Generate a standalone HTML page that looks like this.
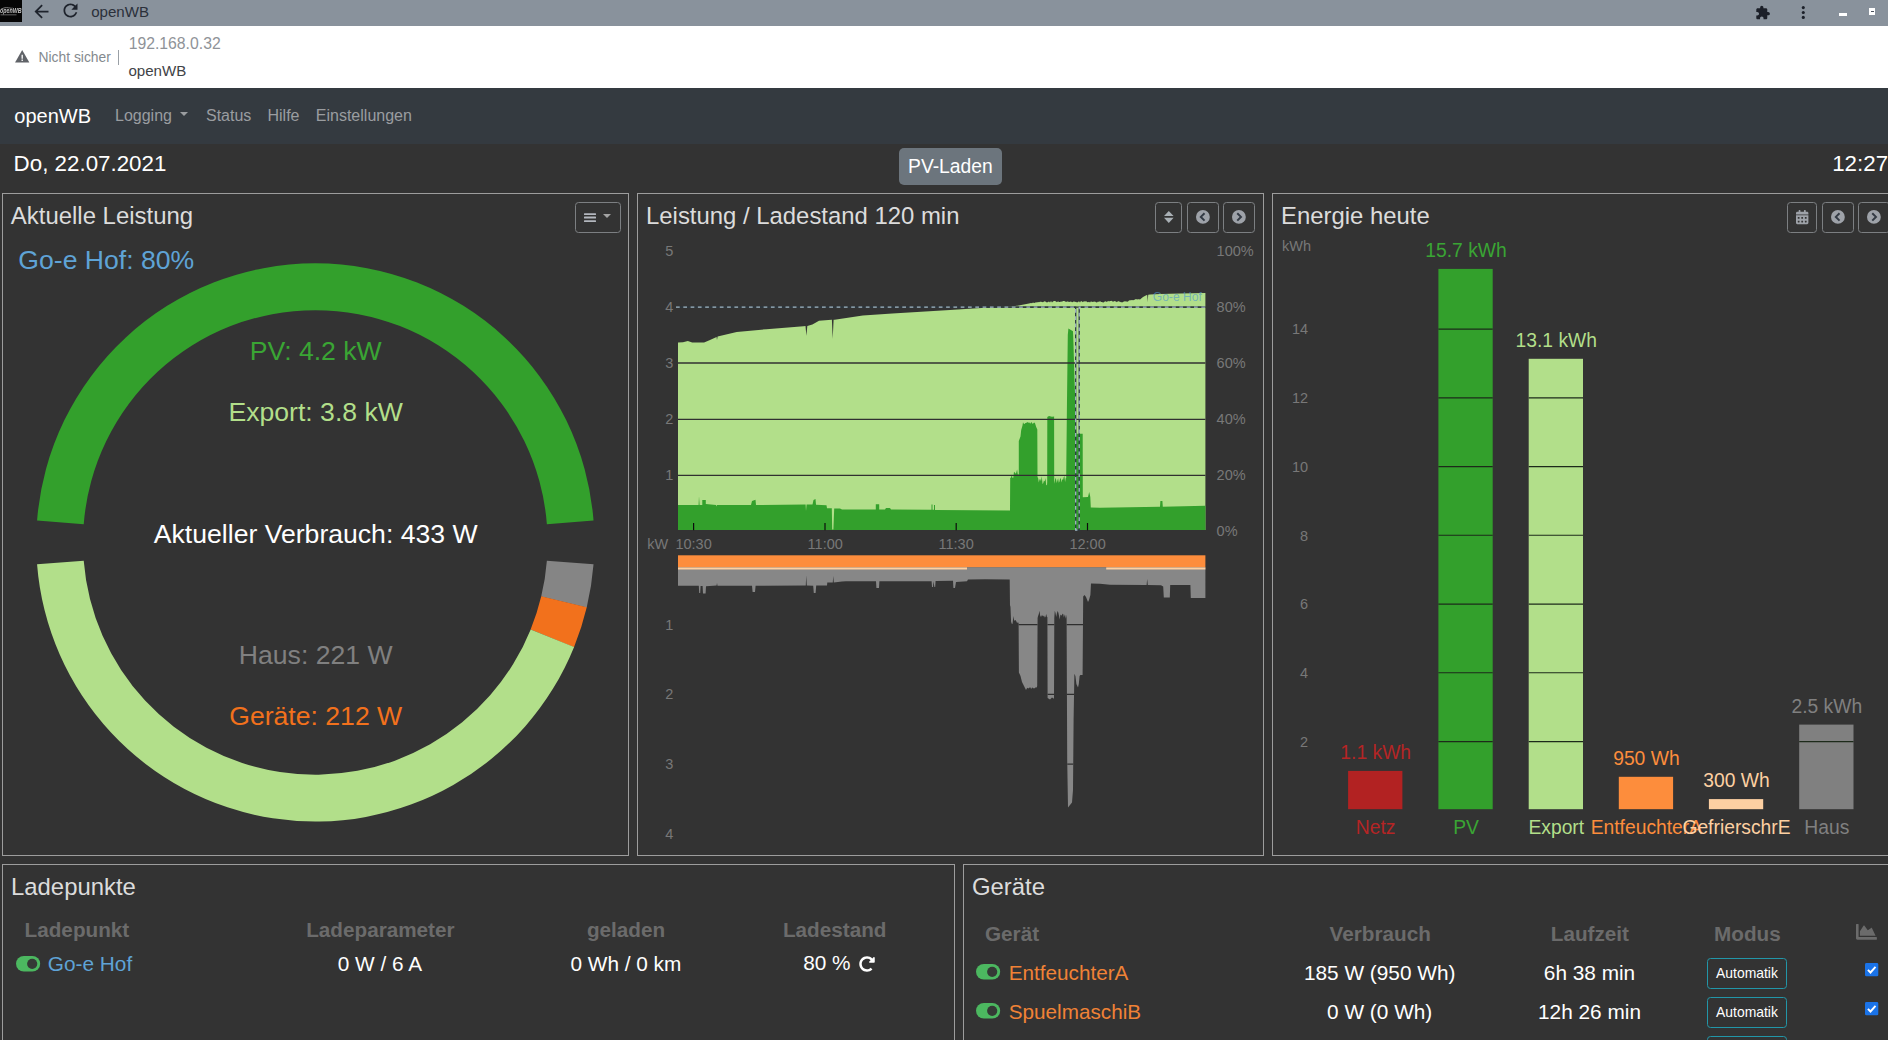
<!DOCTYPE html>
<html lang="de"><head><meta charset="utf-8"><title>openWB</title>
<style>
html,body{margin:0;padding:0;}
body{width:1888px;height:1040px;overflow:hidden;position:relative;background:#333333;font-family:"Liberation Sans", sans-serif;}
.t{position:absolute;white-space:nowrap;line-height:1;font-family:"Liberation Sans", sans-serif;}
.abs{position:absolute;}
.panel{position:absolute;box-sizing:border-box;border:1px solid #9d9d9d;background:#333333;}
.btn{position:absolute;box-sizing:border-box;border:1px solid #7c7f82;border-radius:3.5px;}
svg{position:absolute;overflow:visible;}
</style></head><body>

<div class="abs" style="left:0;top:0;width:1888px;height:26px;background:#89929c;"></div>
<div class="abs" style="left:0;top:0;width:22px;height:22px;background:#050505;"></div>
<svg style="left:0;top:0" width="22" height="22" viewBox="0 0 22 22"><defs><filter id="fb" x="-20%" y="-50%" width="140%" height="200%"><feGaussianBlur stdDeviation=".55"/></filter></defs><g filter="url(#fb)"><text x="10.8" y="12.600" font-family='"Liberation Sans", sans-serif' font-style="italic" font-weight="bold" font-size="6.600" text-anchor="middle" fill="#c4c4c4" textLength="21.500" lengthAdjust="spacingAndGlyphs">openWB</text><path d="M1 9.200c3-1.600 5-1.800 7.500-1.400s3 .7 4 .2" fill="none" stroke="#9a9a9a" stroke-width=".8"/><path d="M.5 14.800h16" stroke="#5a5a5a" stroke-width="1.100"/></g></svg>
<svg style="left:30.5px;top:.6px" width="21" height="21" viewBox="0 0 24 24"><path fill="#1e232c" d="M20 11H7.830l5.590-5.590L12 4l-8 8 8 8 1.410-1.410L7.830 13H20v-2z"/></svg>
<svg style="left:59.8px;top:.4px" width="21" height="21" viewBox="0 0 24 24"><path fill="#1e232c" d="M17.650 6.350C16.200 4.900 14.210 4 12 4c-4.420 0-7.990 3.580-7.990 8s3.570 8 7.990 8c3.730 0 6.840-2.550 7.730-6h-2.080c-.82 2.330-3.040 4-5.650 4-3.310 0-6-2.690-6-6s2.690-6 6-6c1.660 0 3.140.69 4.220 1.780L13 11h7V4l-2.350 2.350z"/></svg>
<div class="t" style="left:91.2px;top:3.6px;font-size:15.1px;color:#2b303a;">openWB</div>
<svg style="left:1755px;top:4.600px" width="15.500" height="15.500" viewBox="0 0 24 24"><path fill="#1c2029" d="M20.500 11H19V7c0-1.100-.9-2-2-2h-4V3.500C13 2.120 11.880 1 10.500 1S8 2.120 8 3.500V5H4c-1.100 0-1.990.9-1.990 2v3.800H3.500c1.490 0 2.700 1.210 2.700 2.700s-1.210 2.700-2.700 2.700H2V20c0 1.100.9 2 2 2h3.800v-1.500c0-1.490 1.210-2.700 2.700-2.700 1.490 0 2.700 1.210 2.700 2.700V22H17c1.100 0 2-.9 2-2v-4h1.500c1.380 0 2.500-1.120 2.500-2.500S21.880 11 20.500 11z"/></svg>
<svg style="left:1798px;top:4px" width="10" height="18" viewBox="0 0 10 18"><circle cx="5.300" cy="3.600" r="1.550" fill="#1c2029"/><circle cx="5.300" cy="8.500" r="1.550" fill="#1c2029"/><circle cx="5.300" cy="13.400" r="1.550" fill="#1c2029"/></svg>
<div class="abs" style="left:1839px;top:13px;width:8px;height:3px;background:#ffffff;"></div>
<div class="abs" style="left:1869px;top:8px;width:6px;height:7px;background:#ffffff;"></div>
<div class="abs" style="left:1870.500px;top:11px;width:3px;height:1px;background:#4a515c;"></div>
<div class="abs" style="left:0;top:26px;width:1888px;height:62px;background:#ffffff;"></div>
<svg style="left:15px;top:50px" width="14.400" height="12.500" viewBox="0 0 24 21"><path fill="#606368" d="M0 21h24L12 0 0 21z"/><path fill="#fff" d="M10.900 8h2.200v6.500h-2.200zM10.900 16h2.200v2.400h-2.200z"/></svg>
<div class="t" style="left:38.500px;top:51px;font-size:13.850px;color:#84898e;">Nicht sicher</div>
<div class="abs" style="left:118px;top:49.500px;width:1px;height:15.500px;background:#9aa0a6;"></div>
<div class="t" style="left:128.700px;top:36px;font-size:15.750px;color:#8f9398;">192.168.0.32</div>
<div class="t" style="left:128.400px;top:62.700px;font-size:15.100px;color:#3f4347;">openWB</div>
<div class="abs" style="left:0;top:88px;width:1888px;height:56px;background:#343a40;"></div>
<div class="t" style="left:14.30px;top:106px;font-size:20px;color:#ffffff;">openWB</div>
<div class="t" style="left:115.00px;top:108px;font-size:16px;color:#9a9da0;">Logging</div>
<div class="abs" style="left:180.4px;top:112px;width:0;height:0;border-left:4.6px solid transparent;border-right:4.6px solid transparent;border-top:4.6px solid #9a9da0;"></div>
<div class="t" style="left:206.00px;top:108px;font-size:16px;color:#9a9da0;">Status</div>
<div class="t" style="left:267.50px;top:108px;font-size:16px;color:#9a9da0;">Hilfe</div>
<div class="t" style="left:315.80px;top:108px;font-size:16px;color:#9a9da0;">Einstellungen</div>
<div class="t" style="left:13.60px;top:153px;font-size:22.35px;color:#ffffff;">Do, 22.07.2021</div>
<div class="abs" style="left:899px;top:147.5px;width:103px;height:37.3px;background:#6c757d;border-radius:5px;"></div>
<div class="t" style="left:650.40px;width:600px;text-align:center;top:157px;font-size:19.3px;color:#ffffff;">PV-Laden</div>
<div class="t" style="left:1832.20px;top:153px;font-size:22.35px;color:#ffffff;">12:27</div>
<div class="panel" style="left:2px;top:193px;width:627px;height:663px;"></div>
<div class="panel" style="left:637px;top:193px;width:627px;height:663px;"></div>
<div class="panel" style="left:1272px;top:193px;width:627px;height:663px;"></div>
<div class="panel" style="left:2px;top:864px;width:953px;height:300px;"></div>
<div class="panel" style="left:963px;top:864px;width:953px;height:300px;"></div>
<div class="t" style="left:10.80px;top:204px;font-size:23.95px;color:#dcdcdc;">Aktuelle Leistung</div>
<div class="t" style="left:646.00px;top:204px;font-size:23.9px;color:#dcdcdc;">Leistung / Ladestand 120 min</div>
<div class="t" style="left:1281.00px;top:204px;font-size:23.9px;color:#dcdcdc;">Energie heute</div>
<div class="t" style="left:11.00px;top:875px;font-size:23.9px;color:#dcdcdc;">Ladepunkte</div>
<div class="t" style="left:972.00px;top:875px;font-size:23.9px;color:#dcdcdc;">Geräte</div>
<div class="btn" style="left:575px;top:202px;width:45.500px;height:31px;"></div>
<svg style="left:583.800px;top:212.800px" width="12" height="10" viewBox="0 0 12 10"><rect x="0" y="0.200" width="12" height="1.800" rx=".5" fill="#b3b7be"/><rect x="0" y="3.600" width="12" height="1.800" rx=".5" fill="#b3b7be"/><rect x="0" y="7.300" width="12" height="1.800" rx=".5" fill="#b3b7be"/></svg>
<div class="abs" style="left:602.700px;top:214.200px;width:0;height:0;border-left:4.400px solid transparent;border-right:4.400px solid transparent;border-top:4.200px solid #a3a3a3;"></div>
<div class="btn" style="left:1155px;top:202px;width:27px;height:31px;"></div>
<svg style="left:1163.600px;top:210.600px" width="9.600" height="12" viewBox="0 0 9.600 12"><path d="M4.800 0L9.600 5.100H0z M4.800 12L9.600 6.800H0z" fill="#a9b0b5"/></svg>
<div class="btn" style="left:1187px;top:202px;width:32px;height:31px;"></div>
<svg style="left:1195.70px;top:209.90px" width="13.8" height="13.8" viewBox="-8 -8 16 16"><circle r="8" fill="#9ea2a9"/><path d="M1.900 -4.300L-2.400 0L1.900 4.300" fill="none" stroke="#333a44" stroke-width="2.300"/></svg>
<div class="btn" style="left:1223px;top:202px;width:32px;height:31px;"></div>
<svg style="left:1232.00px;top:209.90px" width="13.8" height="13.8" viewBox="-8 -8 16 16"><circle r="8" fill="#9ea2a9"/><path d="M-1.900 -4.300L2.400 0L-1.900 4.300" fill="none" stroke="#333a44" stroke-width="2.300"/></svg>
<div class="btn" style="left:1787px;top:202px;width:30px;height:31px;"></div>
<svg style="left:1795.700px;top:209.800px" width="12.400" height="14.200" viewBox="0 0 448 512"><path fill="#9ea2a9" d="M0 464c0 26.500 21.500 48 48 48h352c26.500 0 48-21.500 48-48V192H0v272zm320-196c0-6.600 5.400-12 12-12h40c6.600 0 12 5.400 12 12v40c0 6.600-5.400 12-12 12h-40c-6.600 0-12-5.400-12-12v-40zm0 128c0-6.600 5.400-12 12-12h40c6.600 0 12 5.400 12 12v40c0 6.600-5.400 12-12 12h-40c-6.600 0-12-5.400-12-12v-40zM192 268c0-6.600 5.400-12 12-12h40c6.600 0 12 5.400 12 12v40c0 6.600-5.400 12-12 12h-40c-6.600 0-12-5.400-12-12v-40zm0 128c0-6.600 5.400-12 12-12h40c6.600 0 12 5.400 12 12v40c0 6.600-5.400 12-12 12h-40c-6.600 0-12-5.400-12-12v-40zM64 268c0-6.600 5.400-12 12-12h40c6.600 0 12 5.400 12 12v40c0 6.600-5.400 12-12 12H76c-6.600 0-12-5.400-12-12v-40zm0 128c0-6.600 5.400-12 12-12h40c6.600 0 12 5.400 12 12v40c0 6.600-5.400 12-12 12H76c-6.600 0-12-5.400-12-12v-40zM400 64h-48V16c0-8.800-7.200-16-16-16h-32c-8.800 0-16 7.200-16 16v48H160V16c0-8.800-7.200-16-16-16h-32c-8.800 0-16 7.200-16 16v48H48C21.500 64 0 85.500 0 112v48h448v-48c0-26.500-21.500-48-48-48z"/></svg>
<div class="btn" style="left:1822px;top:202px;width:32px;height:31px;"></div>
<svg style="left:1830.50px;top:210.10px" width="13.8" height="13.8" viewBox="-8 -8 16 16"><circle r="8" fill="#9ea2a9"/><path d="M1.900 -4.300L-2.400 0L1.900 4.300" fill="none" stroke="#333a44" stroke-width="2.300"/></svg>
<div class="btn" style="left:1858px;top:202px;width:32px;height:31px;"></div>
<svg style="left:1866.70px;top:210.10px" width="13.8" height="13.8" viewBox="-8 -8 16 16"><circle r="8" fill="#9ea2a9"/><path d="M-1.900 -4.300L2.400 0L-1.900 4.300" fill="none" stroke="#333a44" stroke-width="2.300"/></svg>
<svg style="left:0;top:0" width="1888" height="1040" viewBox="0 0 1888 1040">
<path fill="#33a02c" d="M37.06 520.50A279.1 279.1 0 0 1 593.54 520.50L546.88 524.17A232.3 232.3 0 0 0 83.72 524.17Z"/>
<path fill="#858585" d="M593.54 564.30A279.1 279.1 0 0 1 586.71 607.45L541.20 596.54A232.3 232.3 0 0 0 546.88 560.63Z"/>
<path fill="#f2711c" d="M586.77 607.21A279.1 279.1 0 0 1 574.00 647.14L530.62 629.58A232.3 232.3 0 0 0 541.25 596.34Z"/>
<path fill="#b2df8a" d="M574.09 646.92A279.1 279.1 0 0 1 37.06 564.30L83.72 560.63A232.3 232.3 0 0 0 530.70 629.39Z"/>
<g font-family='"Liberation Sans", sans-serif'>
<text x="18.3" y="269.4" font-size="26.6" fill="#5fa3d6" text-anchor="start" >Go-e Hof: 80%</text>
<text x="315.7" y="359.7" font-size="26.6" fill="#3aa534" text-anchor="middle" >PV: 4.2 kW</text>
<text x="315.7" y="420.6" font-size="26.6" fill="#b2df8a" text-anchor="middle" >Export: 3.8 kW</text>
<text x="315.7" y="543.2" font-size="26.6" fill="#ffffff" text-anchor="middle" >Aktueller Verbrauch: 433 W</text>
<text x="315.7" y="664.4" font-size="26.6" fill="#808080" text-anchor="middle" >Haus: 221 W</text>
<text x="315.7" y="725.2" font-size="26.6" fill="#f2711c" text-anchor="middle" >Geräte: 212 W</text>
</g></svg>
<svg style="left:0;top:0" width="1888" height="1040" viewBox="0 0 1888 1040">
<polygon fill="#b2df8a" points="678.0,342.6 683.0,342.2 687.8,341.1 692.2,342.6 704.1,342.6 710.0,340.0 716.6,337.0 717.0,340.0 717.6,336.4 736.7,331.9 766.4,329.2 803.5,326.3 805.5,326.0 806.4,335.8 807.3,325.9 812.4,324.5 819.0,320.8 831.6,319.7 831.9,319.7 832.7,338.8 833.6,319.7 834.6,319.7 862.8,315.6 892.4,313.4 950.0,310.1 977.0,308.3 1014.0,306.3 1029.0,303.6 1030.0,303.2 1031.0,302.9 1032.0,303.3 1033.0,302.6 1034.0,303.0 1035.0,302.7 1036.0,302.3 1037.0,302.6 1038.0,302.0 1039.0,302.3 1040.0,301.8 1041.0,301.7 1042.0,302.0 1043.0,302.2 1044.0,301.4 1045.0,301.3 1046.0,302.0 1047.0,302.6 1048.0,301.9 1049.0,301.6 1050.0,302.6 1051.0,301.0 1052.0,302.4 1053.0,301.4 1054.0,301.1 1055.0,301.1 1056.0,301.4 1057.0,302.3 1058.0,301.2 1059.0,301.9 1060.0,302.0 1061.0,301.5 1062.0,301.8 1063.0,301.0 1064.0,301.0 1065.0,301.2 1066.0,302.1 1067.0,301.6 1068.0,301.4 1069.0,301.9 1070.0,301.7 1071.0,301.4 1072.0,302.3 1073.0,302.1 1074.0,301.3 1075.0,301.9 1076.0,301.8 1077.0,302.4 1078.0,302.1 1079.0,301.3 1080.0,302.6 1081.0,301.0 1082.0,301.6 1083.0,302.2 1084.0,301.1 1085.0,301.7 1086.0,300.9 1087.0,302.0 1088.0,302.2 1089.0,301.8 1090.0,302.4 1091.0,301.3 1092.0,302.0 1093.0,301.8 1094.0,301.8 1095.0,301.6 1096.0,302.3 1097.0,302.5 1098.0,301.6 1099.0,302.0 1100.0,300.9 1101.0,302.0 1102.0,301.9 1103.0,302.5 1104.0,302.2 1105.0,301.3 1106.0,301.4 1107.0,301.9 1108.0,300.8 1109.0,301.6 1110.0,301.0 1111.0,300.9 1112.0,300.8 1113.0,302.1 1114.0,301.0 1115.0,301.2 1116.0,301.4 1117.0,302.3 1118.0,300.9 1119.0,301.5 1120.0,301.7 1121.0,302.3 1122.0,302.2 1123.0,302.3 1124.0,301.2 1125.0,301.4 1126.0,301.2 1127.0,301.7 1128.0,301.6 1129.0,300.5 1130.0,300.3 1131.0,300.2 1132.0,300.1 1133.0,300.2 1134.0,300.1 1135.0,299.6 1136.0,299.1 1137.0,299.4 1138.0,299.2 1139.0,299.3 1140.0,299.5 1143.0,297.0 1146.8,295.0 1147.3,295.2 1147.7,302.0 1148.2,294.8 1150.0,294.4 1160.0,294.1 1180.0,293.6 1205.4,293.0 1205.4,530.0 678.0,530.0"/>
<polygon fill="#33a02c" points="678.0,504.9 698.6,504.9 699.0,496.3 699.6,504.9 702.3,504.9 702.3,500.0 705.8,500.0 705.8,504.0 716.0,504.9 716.5,506.5 717.0,505.0 751.0,505.0 752.0,501.0 755.5,499.7 756.0,505.0 805.6,504.6 806.0,511.0 806.6,504.6 812.5,504.6 813.5,500.0 815.5,499.0 816.0,504.8 826.5,505.2 827.0,508.2 831.8,508.2 832.2,529.5 833.4,529.5 834.2,508.5 840.0,508.5 842.0,509.6 875.8,509.6 875.8,504.2 879.2,504.2 879.2,509.6 885.0,509.6 886.0,508.0 890.0,508.0 891.0,509.5 931.5,509.7 931.5,504.6 932.5,504.6 932.5,509.7 934.0,509.7 934.0,505.0 935.0,505.0 935.0,509.9 1010.0,510.4 1010.2,478.0 1011.0,477.4 1011.7,474.4 1012.5,477.9 1013.3,477.8 1014.0,471.8 1014.8,472.5 1015.5,473.7 1016.3,472.4 1017.1,469.4 1017.8,474.2 1018.6,474.2 1018.8,476.0 1018.8,441.0 1020.5,436.5 1021.2,430.0 1022.5,425.5 1023.0,422.2 1023.8,423.7 1024.6,424.0 1025.4,423.0 1026.2,423.0 1027.0,422.2 1027.8,422.3 1028.6,422.8 1029.4,422.6 1030.2,423.8 1031.0,422.5 1031.8,422.2 1032.6,424.1 1033.4,423.2 1034.2,422.5 1035.0,423.3 1036.2,427.0 1037.3,429.5 1037.5,477.6 1038.0,477.6 1038.8,482.6 1039.5,479.6 1040.2,479.1 1041.0,481.2 1041.8,476.3 1042.5,483.9 1043.2,483.3 1044.0,480.6 1044.8,481.4 1045.5,477.9 1046.2,485.0 1047.0,485.2 1047.2,482.0 1047.3,417.0 1049.0,416.0 1052.0,416.8 1054.1,416.5 1054.2,480.0 1054.6,483.7 1055.3,478.0 1056.0,479.0 1056.7,483.0 1057.4,480.4 1058.1,478.2 1058.8,482.7 1059.5,481.6 1060.2,478.1 1060.9,478.9 1061.6,482.6 1062.3,479.0 1063.0,480.1 1063.7,477.3 1064.4,476.1 1065.1,482.0 1065.8,478.1 1066.2,478.0 1067.0,400.0 1067.8,335.0 1068.4,328.6 1073.0,331.2 1073.5,345.0 1074.5,380.0 1076.5,433.8 1082.7,433.8 1082.8,497.2 1088.0,497.0 1089.2,492.0 1090.3,497.0 1090.8,507.6 1100.0,507.8 1130.0,507.2 1160.0,506.8 1160.4,501.0 1162.4,501.0 1162.8,506.7 1205.4,505.8 1205.4,530.0 678.0,530.0"/>
<line x1="678.0" x2="1205.4" y1="363.0" y2="363.0" stroke="#303030" stroke-width="1.3"/>
<line x1="678.0" x2="1205.4" y1="419.3" y2="419.3" stroke="#303030" stroke-width="1.3"/>
<line x1="678.0" x2="1205.4" y1="475.3" y2="475.3" stroke="#303030" stroke-width="1.3"/>
<line x1="678.0" x2="1205.4" y1="307.2" y2="307.2" stroke="#303030" stroke-width="1.3"/>
<line x1="693.6" x2="693.6" y1="523" y2="530.3" stroke="#0c0c0c" stroke-width="1.2"/>
<line x1="825.0" x2="825.0" y1="523" y2="530.3" stroke="#0c0c0c" stroke-width="1.2"/>
<line x1="956.2" x2="956.2" y1="523" y2="530.3" stroke="#0c0c0c" stroke-width="1.2"/>
<line x1="1087.5" x2="1087.5" y1="523" y2="530.3" stroke="#0c0c0c" stroke-width="1.2"/>
<path d="M676 307.2H1075.700V530H1079.200V307.200H1205.4" fill="none" stroke="#2c3a44" stroke-width="1.300"/>
<path d="M676 307.2H1075.700V530H1079.200V307.200H1205.4" fill="none" stroke="#a2b8c4" stroke-width="1.300" stroke-dasharray="3.700 3.600"/>
<rect x="678.0" y="555.3" width="527.4000000000001" height="12.200000000000045" fill="#fd8d3c"/>
<polygon fill="#878787" points="678.0,585.8 698.8,585.8 699.2,593.0 700.2,593.0 700.6,586.0 702.6,586.0 703.0,593.5 705.6,593.5 706.0,586.2 716.6,585.6 717.0,583.0 717.5,585.8 752.0,585.8 752.6,592.0 755.0,592.0 755.6,585.8 805.8,585.6 806.2,575.4 806.8,585.6 813.2,585.8 813.8,593.0 815.6,593.0 816.2,585.6 827.0,585.4 827.3,582.6 832.8,582.4 833.2,576.0 833.8,582.4 842.0,581.6 846.0,581.2 876.0,581.3 876.4,588.0 879.0,588.0 879.4,581.3 931.6,581.2 932.0,587.0 933.0,587.0 933.4,581.2 934.4,587.0 935.2,587.0 935.6,581.0 953.0,580.7 953.4,588.0 955.0,588.0 956.0,582.0 967.0,581.3 968.0,579.6 985.0,579.2 1009.7,579.4 1010.0,607.0 1010.4,605.2 1011.1,622.1 1011.9,624.0 1012.6,623.8 1013.4,615.9 1014.1,620.4 1014.9,620.6 1015.6,620.1 1016.4,621.6 1017.1,623.1 1017.9,622.3 1018.6,623.0 1018.9,672.5 1020.5,676.0 1022.0,682.0 1024.0,686.0 1026.0,690.0 1026.5,689.1 1027.4,687.7 1028.4,688.6 1029.3,687.8 1030.2,687.3 1031.2,689.0 1032.1,687.4 1033.1,688.0 1034.0,688.4 1034.9,687.9 1035.9,687.2 1036.8,687.5 1037.2,686.0 1037.6,618.0 1038.0,616.3 1038.8,613.9 1039.5,610.7 1040.2,615.8 1041.0,617.0 1041.8,615.3 1042.5,615.5 1043.2,616.4 1044.0,615.5 1044.8,617.5 1045.5,617.0 1046.2,613.9 1047.0,617.2 1047.4,617.0 1047.6,698.0 1050.0,699.5 1052.0,697.5 1054.0,698.8 1054.3,618.0 1054.8,610.7 1055.5,613.0 1056.2,617.1 1056.9,613.6 1057.6,611.0 1058.3,612.5 1059.0,615.8 1059.7,619.4 1060.4,614.5 1061.1,615.3 1061.8,615.5 1062.5,613.8 1063.2,614.1 1063.9,617.6 1064.6,614.3 1065.3,618.7 1066.0,614.4 1066.6,618.0 1067.2,760.0 1068.0,807.5 1070.0,805.0 1072.0,802.5 1073.0,790.0 1073.6,720.0 1074.4,673.8 1075.4,676.0 1076.4,684.0 1078.0,687.5 1078.8,684.0 1079.6,676.0 1080.4,675.0 1082.6,675.0 1083.2,596.5 1084.5,595.0 1086.0,597.0 1088.0,602.0 1089.0,600.0 1090.4,595.0 1091.0,583.6 1100.0,583.8 1110.0,584.8 1146.6,585.0 1147.2,579.0 1147.8,585.0 1161.0,585.2 1163.2,586.5 1163.8,597.6 1169.8,597.6 1170.2,585.0 1190.4,585.0 1190.8,598.1 1205.4,598.1 1205.4,567.4 1106.2,567.4 1106.2,567.2 967.0,567.2 967.0,567.4 678.0,567.4"/>
<rect x="678.0" y="567.400" width="289.0" height="2.100" fill="#fdd0a2"/>
<rect x="1106.200" y="567.400" width="99.20000000000005" height="2.100" fill="#fdd0a2"/>
<clipPath id="cg"><polygon points="678.0,585.8 698.8,585.8 699.2,593.0 700.2,593.0 700.6,586.0 702.6,586.0 703.0,593.5 705.6,593.5 706.0,586.2 716.6,585.6 717.0,583.0 717.5,585.8 752.0,585.8 752.6,592.0 755.0,592.0 755.6,585.8 805.8,585.6 806.2,575.4 806.8,585.6 813.2,585.8 813.8,593.0 815.6,593.0 816.2,585.6 827.0,585.4 827.3,582.6 832.8,582.4 833.2,576.0 833.8,582.4 842.0,581.6 846.0,581.2 876.0,581.3 876.4,588.0 879.0,588.0 879.4,581.3 931.6,581.2 932.0,587.0 933.0,587.0 933.4,581.2 934.4,587.0 935.2,587.0 935.6,581.0 953.0,580.7 953.4,588.0 955.0,588.0 956.0,582.0 967.0,581.3 968.0,579.6 985.0,579.2 1009.7,579.4 1010.0,607.0 1010.4,605.2 1011.1,622.1 1011.9,624.0 1012.6,623.8 1013.4,615.9 1014.1,620.4 1014.9,620.6 1015.6,620.1 1016.4,621.6 1017.1,623.1 1017.9,622.3 1018.6,623.0 1018.9,672.5 1020.5,676.0 1022.0,682.0 1024.0,686.0 1026.0,690.0 1026.5,689.1 1027.4,687.7 1028.4,688.6 1029.3,687.8 1030.2,687.3 1031.2,689.0 1032.1,687.4 1033.1,688.0 1034.0,688.4 1034.9,687.9 1035.9,687.2 1036.8,687.5 1037.2,686.0 1037.6,618.0 1038.0,616.3 1038.8,613.9 1039.5,610.7 1040.2,615.8 1041.0,617.0 1041.8,615.3 1042.5,615.5 1043.2,616.4 1044.0,615.5 1044.8,617.5 1045.5,617.0 1046.2,613.9 1047.0,617.2 1047.4,617.0 1047.6,698.0 1050.0,699.5 1052.0,697.5 1054.0,698.8 1054.3,618.0 1054.8,610.7 1055.5,613.0 1056.2,617.1 1056.9,613.6 1057.6,611.0 1058.3,612.5 1059.0,615.8 1059.7,619.4 1060.4,614.5 1061.1,615.3 1061.8,615.5 1062.5,613.8 1063.2,614.1 1063.9,617.6 1064.6,614.3 1065.3,618.7 1066.0,614.4 1066.6,618.0 1067.2,760.0 1068.0,807.5 1070.0,805.0 1072.0,802.5 1073.0,790.0 1073.6,720.0 1074.4,673.8 1075.4,676.0 1076.4,684.0 1078.0,687.5 1078.8,684.0 1079.6,676.0 1080.4,675.0 1082.6,675.0 1083.2,596.5 1084.5,595.0 1086.0,597.0 1088.0,602.0 1089.0,600.0 1090.4,595.0 1091.0,583.6 1100.0,583.8 1110.0,584.8 1146.6,585.0 1147.2,579.0 1147.8,585.0 1161.0,585.2 1163.2,586.5 1163.8,597.6 1169.8,597.6 1170.2,585.0 1190.4,585.0 1190.8,598.1 1205.4,598.1 1205.4,567.4 1106.2,567.4 1106.2,567.2 967.0,567.2 967.0,567.4 678.0,567.4"/></clipPath><g clip-path="url(#cg)">
<line x1="678.0" x2="1205.4" y1="624.6" y2="624.6" stroke="#2e2e2e" stroke-width="1.200"/>
<line x1="678.0" x2="1205.4" y1="694.3" y2="694.3" stroke="#2e2e2e" stroke-width="1.200"/>
<line x1="678.0" x2="1205.4" y1="764.2" y2="764.2" stroke="#2e2e2e" stroke-width="1.200"/>
</g>
<g font-family='"Liberation Sans", sans-serif' font-size="14.500" fill="#787878">
<text x="673.400" y="256.3" text-anchor="end">5</text>
<text x="673.400" y="312.2" text-anchor="end">4</text>
<text x="673.400" y="368.1" text-anchor="end">3</text>
<text x="673.400" y="424.4" text-anchor="end">2</text>
<text x="673.400" y="480.4" text-anchor="end">1</text>
<text x="673.400" y="629.7" text-anchor="end">1</text>
<text x="673.400" y="699.4" text-anchor="end">2</text>
<text x="673.400" y="769.3" text-anchor="end">3</text>
<text x="673.400" y="839.1" text-anchor="end">4</text>
<text x="1216.600" y="256.3">100%</text>
<text x="1216.600" y="312.2">80%</text>
<text x="1216.600" y="368.1">60%</text>
<text x="1216.600" y="424.4">40%</text>
<text x="1216.600" y="480.4">20%</text>
<text x="1216.600" y="536.3">0%</text>
<text x="693.6" y="549" text-anchor="middle">10:30</text>
<text x="825.2" y="549" text-anchor="middle">11:00</text>
<text x="956.1" y="549" text-anchor="middle">11:30</text>
<text x="1087.6" y="549" text-anchor="middle">12:00</text>
<text x="647.300" y="549">kW</text>
</g>
<text x="1201.800" y="301.300" font-family='"Liberation Sans", sans-serif' font-size="12.100" fill="#4f97cf" fill-opacity=".62" text-anchor="end">Go-e Hof</text>
</svg>
<svg style="left:0;top:0" width="1888" height="1040" viewBox="0 0 1888 1040">
<rect x="1348.1" y="770.9" width="54.3" height="38.3" fill="#b22222"/>
<rect x="1438.4" y="268.9" width="54.3" height="540.3" fill="#33a02c"/>
<rect x="1528.7" y="358.8" width="54.3" height="450.4" fill="#b2df8a"/>
<rect x="1618.8" y="776.8" width="54.3" height="32.4" fill="#fd8d3c"/>
<rect x="1708.9" y="799.1" width="54.3" height="10.1" fill="#fdd0a2"/>
<rect x="1799.2" y="724.6" width="54.3" height="84.6" fill="#808080"/>
<line x1="1438.4" x2="1492.7" y1="741.6" y2="741.6" stroke="#1d2a1a" stroke-width="1.1"/>
<line x1="1438.4" x2="1492.7" y1="672.8" y2="672.8" stroke="#1d2a1a" stroke-width="1.1"/>
<line x1="1438.4" x2="1492.7" y1="604.1" y2="604.1" stroke="#1d2a1a" stroke-width="1.1"/>
<line x1="1438.4" x2="1492.7" y1="535.3" y2="535.3" stroke="#1d2a1a" stroke-width="1.1"/>
<line x1="1438.4" x2="1492.7" y1="466.6" y2="466.6" stroke="#1d2a1a" stroke-width="1.1"/>
<line x1="1438.4" x2="1492.7" y1="397.9" y2="397.9" stroke="#1d2a1a" stroke-width="1.1"/>
<line x1="1438.4" x2="1492.7" y1="329.1" y2="329.1" stroke="#1d2a1a" stroke-width="1.1"/>
<line x1="1528.7" x2="1583.0" y1="741.6" y2="741.6" stroke="#1d2a1a" stroke-width="1.1"/>
<line x1="1528.7" x2="1583.0" y1="672.8" y2="672.8" stroke="#1d2a1a" stroke-width="1.1"/>
<line x1="1528.7" x2="1583.0" y1="604.1" y2="604.1" stroke="#1d2a1a" stroke-width="1.1"/>
<line x1="1528.7" x2="1583.0" y1="535.3" y2="535.3" stroke="#1d2a1a" stroke-width="1.1"/>
<line x1="1528.7" x2="1583.0" y1="466.6" y2="466.6" stroke="#1d2a1a" stroke-width="1.1"/>
<line x1="1528.7" x2="1583.0" y1="397.9" y2="397.9" stroke="#1d2a1a" stroke-width="1.1"/>
<line x1="1799.2" x2="1853.5" y1="741.6" y2="741.6" stroke="#1d2a1a" stroke-width="1.1"/>
<g font-family='"Liberation Sans", sans-serif' font-size="19.300" text-anchor="middle">
<text x="1375.7" y="758.9" fill="#b52525">1.1 kWh</text>
<text x="1375.7" y="833.600" fill="#b52525">Netz</text>
<text x="1466.0" y="256.9" fill="#3aa534">15.7 kWh</text>
<text x="1466.0" y="833.600" fill="#3aa534">PV</text>
<text x="1556.3" y="346.8" fill="#b2df8a">13.1 kWh</text>
<text x="1556.3" y="833.600" fill="#b2df8a">Export</text>
<text x="1646.4" y="764.8" fill="#fd8d3c">950 Wh</text>
<text x="1646.4" y="833.600" fill="#fd8d3c">EntfeuchterA</text>
<text x="1736.5" y="787.1" fill="#fdd0a2">300 Wh</text>
<text x="1736.5" y="833.600" fill="#fdd0a2">GefrierschrE</text>
<text x="1826.8" y="712.6" fill="#808080">2.5 kWh</text>
<text x="1826.8" y="833.600" fill="#808080">Haus</text>
</g>
<g font-family='"Liberation Sans", sans-serif' font-size="14.500" fill="#787878">
<text x="1282" y="250.700">kWh</text>
<text x="1308.200" y="746.9" text-anchor="end">2</text>
<text x="1308.200" y="678.1" text-anchor="end">4</text>
<text x="1308.200" y="609.4" text-anchor="end">6</text>
<text x="1308.200" y="540.6" text-anchor="end">8</text>
<text x="1308.200" y="471.9" text-anchor="end">10</text>
<text x="1308.200" y="403.2" text-anchor="end">12</text>
<text x="1308.200" y="334.4" text-anchor="end">14</text>
</g></svg>
<div class="t" style="left:24.60px;top:920px;font-size:20.7px;color:#6b6b6b;font-weight:bold;">Ladepunkt</div>
<div class="t" style="left:80.40px;width:600px;text-align:center;top:920px;font-size:20.7px;color:#6b6b6b;font-weight:bold;">Ladeparameter</div>
<div class="t" style="left:326.00px;width:600px;text-align:center;top:920px;font-size:20.7px;color:#6b6b6b;font-weight:bold;">geladen</div>
<div class="t" style="left:534.70px;width:600px;text-align:center;top:920px;font-size:20.7px;color:#6b6b6b;font-weight:bold;">Ladestand</div>
<svg style="left:15.8px;top:955.8px" width="24.200" height="15.600" viewBox="0 0 24.200 15.600"><rect x="0" y="0" width="24.200" height="15.600" rx="7.800" fill="#4cb860"/><circle cx="16.200" cy="7.800" r="5.100" fill="#353a36"/></svg>
<div class="t" style="left:47.80px;top:954px;font-size:20.8px;color:#5fa3d6;">Go-e Hof</div>
<div class="t" style="left:79.90px;width:600px;text-align:center;top:954px;font-size:20.8px;color:#ffffff;">0 W / 6 A</div>
<div class="t" style="left:325.90px;width:600px;text-align:center;top:954px;font-size:20.8px;color:#ffffff;">0 Wh / 0 km</div>
<div class="t" style="left:803.20px;top:953px;font-size:20.8px;color:#ffffff;">80 %</div>
<svg style="left:859.300px;top:956.100px" width="16" height="16" viewBox="0 0 512 512"><path fill="#ffffff" d="M256.455 8c66.269.119 126.437 26.233 170.859 68.685l35.715-35.715C478.149 25.851 504 36.559 504 57.941V192c0 13.255-10.745 24-24 24H345.941c-21.382 0-32.090-25.851-16.971-40.971l41.750-41.750c-30.864-28.899-70.801-44.907-113.230-45.273-92.398-.798-170.283 73.977-169.484 169.442C88.764 348.009 162.184 424 256 424c41.127 0 79.997-14.678 110.629-41.556 4.743-4.161 11.906-3.908 16.368.553l39.662 39.662c4.872 4.872 4.631 12.815-.482 17.433C378.202 479.813 319.926 504 256 504 119.034 504 8.001 392.967 8 256.002 7.999 119.193 119.646 7.755 256.455 8z"/></svg>
<div class="t" style="left:985.00px;top:924px;font-size:20.7px;color:#6b6b6b;font-weight:bold;">Gerät</div>
<div class="t" style="left:1080.20px;width:600px;text-align:center;top:924px;font-size:20.7px;color:#6b6b6b;font-weight:bold;">Verbrauch</div>
<div class="t" style="left:1289.90px;width:600px;text-align:center;top:924px;font-size:20.7px;color:#6b6b6b;font-weight:bold;">Laufzeit</div>
<div class="t" style="left:1447.40px;width:600px;text-align:center;top:924px;font-size:20.7px;color:#6b6b6b;font-weight:bold;">Modus</div>
<svg style="left:1856.200px;top:923.600px" width="20.900" height="15.700" viewBox="0 0 512 384"><path fill="#6b6b6b" d="M500 320H64V12C64 5.400 58.600 0 52 0H12C5.400 0 0 5.400 0 12v340c0 17.700 14.300 32 32 32h468c6.600 0 12-5.400 12-12v-40c0-6.600-5.400-12-12-12zM372.700 95.500L288 152l-84.600-112.800c-5-6.700-15.200-6.300-19.700.8L96 176v112h384l-89.900-187.800c-3.200-6.500-11.400-8.700-17.400-4.700z"/></svg>
<svg style="left:976.1px;top:964.2px" width="24.200" height="15.600" viewBox="0 0 24.200 15.600"><rect x="0" y="0" width="24.200" height="15.600" rx="7.800" fill="#4cb860"/><circle cx="16.200" cy="7.800" r="5.100" fill="#353a36"/></svg>
<div class="t" style="left:1008.80px;top:963px;font-size:20.7px;color:#f08236;">EntfeuchterA</div>
<div class="t" style="left:1079.70px;width:600px;text-align:center;top:963px;font-size:20.8px;color:#ffffff;">185 W (950 Wh)</div>
<div class="t" style="left:1289.50px;width:600px;text-align:center;top:963px;font-size:20.8px;color:#ffffff;">6h 38 min</div>
<div class="abs" style="left:1707.300px;top:957.9px;width:79.500px;height:31px;box-sizing:border-box;border:1px solid #2296a8;border-radius:3.5px;"></div>
<div class="t" style="left:1447.00px;width:600px;text-align:center;top:967px;font-size:13.9px;color:#ffffff;">Automatik</div>
<svg style="left:1865px;top:962.9px" width="13.300" height="13.300" viewBox="0 0 13.300 13.300"><rect width="13.300" height="13.300" rx="1.400" fill="#1a73e8"/><path d="M2.900 6.900L5.500 9.500L10.500 3.900" fill="none" stroke="#fff" stroke-width="1.900"/></svg>
<svg style="left:976.1px;top:1003.0px" width="24.200" height="15.600" viewBox="0 0 24.200 15.600"><rect x="0" y="0" width="24.200" height="15.600" rx="7.800" fill="#4cb860"/><circle cx="16.200" cy="7.800" r="5.100" fill="#353a36"/></svg>
<div class="t" style="left:1008.80px;top:1002px;font-size:20.7px;color:#f08236;">SpuelmaschiB</div>
<div class="t" style="left:1079.70px;width:600px;text-align:center;top:1002px;font-size:20.8px;color:#ffffff;">0 W (0 Wh)</div>
<div class="t" style="left:1289.50px;width:600px;text-align:center;top:1002px;font-size:20.8px;color:#ffffff;">12h 26 min</div>
<div class="abs" style="left:1707.300px;top:996.7px;width:79.500px;height:31px;box-sizing:border-box;border:1px solid #2296a8;border-radius:3.5px;"></div>
<div class="t" style="left:1447.00px;width:600px;text-align:center;top:1006px;font-size:13.9px;color:#ffffff;">Automatik</div>
<svg style="left:1865px;top:1001.7px" width="13.300" height="13.300" viewBox="0 0 13.300 13.300"><rect width="13.300" height="13.300" rx="1.400" fill="#1a73e8"/><path d="M2.900 6.900L5.500 9.500L10.500 3.900" fill="none" stroke="#fff" stroke-width="1.900"/></svg>
<div class="abs" style="left:1707.300px;top:1036.200px;width:79.500px;height:31px;box-sizing:border-box;border:1px solid #2296a8;border-radius:3.5px;"></div>
</body></html>
